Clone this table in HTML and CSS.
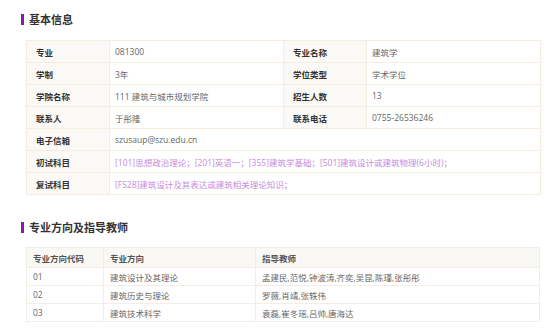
FILE: index.html
```html
<!DOCTYPE html>
<html lang="zh">
<head>
<meta charset="utf-8">
<link rel="stylesheet" href="styles.css">
</head>
<body>
<div class="page">
  <h2 class="title"><span class="bar"></span>基本信息</h2>
  <table class="info">
    <colgroup><col class="c1"><col class="c2"><col class="c1"><col class="c2"></colgroup>
    <tr><td class="lab">专业</td><td class="val">081300</td><td class="lab">专业名称</td><td class="val">建筑学</td></tr>
    <tr><td class="lab">学制</td><td class="val">3年</td><td class="lab">学位类型</td><td class="val">学术学位</td></tr>
    <tr><td class="lab">学院名称</td><td class="val">111 建筑与城市规划学院</td><td class="lab">招生人数</td><td class="val">13</td></tr>
    <tr><td class="lab">联系人</td><td class="val">于彤隆</td><td class="lab">联系电话</td><td class="val">0755-26536246</td></tr>
    <tr><td class="lab">电子信箱</td><td class="val" colspan="3">szusaup@szu.edu.cn</td></tr>
    <tr><td class="lab">初试科目</td><td class="val purple" colspan="3">[101]思想政治理论；[201]英语一；[355]建筑学基础；[501]建筑设计或建筑物理(6小时)；</td></tr>
    <tr><td class="lab">复试科目</td><td class="val purple" colspan="3">[FS28]建筑设计及其表达或建筑相关理论知识；</td></tr>
  </table>

  <h2 class="title second"><span class="bar"></span>专业方向及指导教师</h2>
  <table class="dir">
    <colgroup><col class="d1"><col class="d2"><col class="d3"></colgroup>
    <tr class="head"><th>专业方向代码</th><th>专业方向</th><th>指导教师</th></tr>
    <tr><td>01</td><td>建筑设计及其理论</td><td>孟建民,范悦,钟波涛,齐奕,吴昆,陈瑾,张彤彤</td></tr>
    <tr><td>02</td><td>建筑历史与理论</td><td>罗薇,肖靖,张轶伟</td></tr>
    <tr><td>03</td><td>建筑技术科学</td><td>袁磊,崔冬瑶,吕帅,唐海达</td></tr>
  </table>
</div>
</body>
</html>
```

FILE: styles.css
```css
* { box-sizing: border-box; }
html, body { margin: 0; padding: 0; background: #fff; }
body {
  font-family: "Open Sans", "Noto Sans CJK SC", "Noto Sans", sans-serif;
  font-size: 8.5px;
  color: #666;
}
.page { padding: 12px 14px 0 21px; }
.title {
  display: flex;
  align-items: center;
  gap: 5px;
  margin: 0;
  height: 14px;
  font-family: "Noto Sans CJK SC", sans-serif;
  font-size: 11px;
  font-weight: 700;
  color: #333;
  line-height: 14px;
}
.title .bar {
  display: block;
  width: 3px;
  height: 11px;
  background: #7d1fa8;
}
.title.second { margin-top: 25px; }

table { border-collapse: collapse; width: 514px; margin-left: 5px; table-layout: fixed; }
.info { margin-top: 14px; }
.info col.c1 { width: 83px; }
.info col.c2 { width: 174px; }
.info td {
  height: 22px;
  padding: 0 0 0 5px;
  border: 1px solid #f6ede2;
  vertical-align: middle;
  white-space: nowrap;
}
.info td.lab {
  background: #fbf9f5;
  color: #333;
  font-weight: 700;
  padding-left: 9px;
}
.info td.val { color: #666; }
.info td.purple { color: #c68bdd; }

.dir { margin-top: 13px; }
.dir col.d1 { width: 77px; }
.dir col.d2 { width: 152px; }
.dir th, .dir td {
  border: 1px solid #f3ede4;
  padding: 0 0 0 6px;
  text-align: left;
  white-space: nowrap;
}
.dir th {
  height: 20px;
  background: #faf8f4;
  color: #555;
  font-weight: 700;
}
.dir td { height: 18px; color: #666; }
```
